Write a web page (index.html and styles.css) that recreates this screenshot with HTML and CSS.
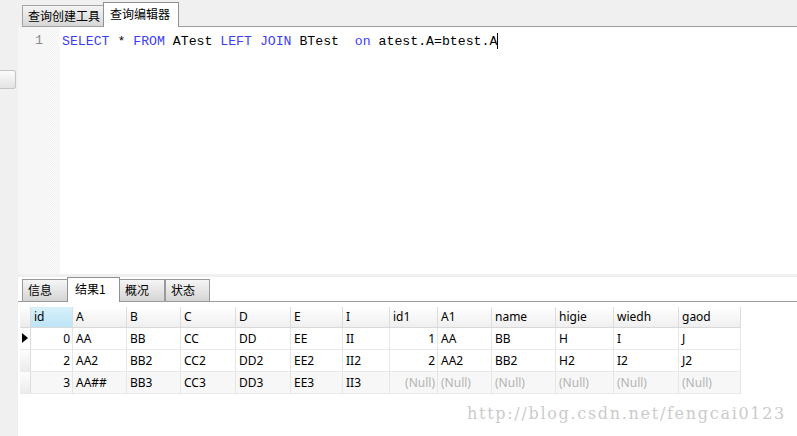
FILE: index.html
```html
<!DOCTYPE html>
<html>
<head>
<meta charset="utf-8">
<link rel="stylesheet" href="styles.css">
</head>
<body>
<div class="app">
  <div class="topbar">
    <div class="tb-pad"></div>
    <div class="tab">查询创建工具</div>
    <div class="tab active">查询编辑器</div>
    <div class="tb-fill"></div>
  </div>
  <div class="main">
    <div class="side"><div class="handle"></div></div>
    <div class="content">
      <div class="editor">
        <div class="gutter"><div class="ln">1</div></div>
        <div class="fold"></div>
        <div class="code"><span class="kw">SELECT</span> * <span class="kw">FROM</span> ATest <span class="kw">LEFT</span> <span class="kw">JOIN</span> BTest  <span class="kw">on</span> atest.A=btest.A<span class="caret"></span></div>
      </div>
      <div class="split"></div>
      <div class="results">
        <div class="rtabs">
          <div class="rt-pad"></div>
          <div class="rtab w46">信息</div>
          <div class="rtab active">结果1</div>
          <div class="rtab w46">概况</div>
          <div class="rtab w45">状态</div>
          <div class="rt-fill"></div>
        </div>
        <div class="grid">
          <div class="c hd rh"></div>
          <div class="c hd sel">id</div>
          <div class="c hd">A</div>
          <div class="c hd">B</div>
          <div class="c hd">C</div>
          <div class="c hd">D</div>
          <div class="c hd">E</div>
          <div class="c hd">I</div>
          <div class="c hd">id1</div>
          <div class="c hd">A1</div>
          <div class="c hd">name</div>
          <div class="c hd">higie</div>
          <div class="c hd">wiedh</div>
          <div class="c hd">gaod</div>

          <div class="c rh cur"><span class="tri"></span></div>
          <div class="c num">0</div>
          <div class="c">AA</div>
          <div class="c">BB</div>
          <div class="c">CC</div>
          <div class="c">DD</div>
          <div class="c">EE</div>
          <div class="c">II</div>
          <div class="c num">1</div>
          <div class="c">AA</div>
          <div class="c">BB</div>
          <div class="c">H</div>
          <div class="c">I</div>
          <div class="c">J</div>

          <div class="c rh"></div>
          <div class="c num">2</div>
          <div class="c">AA2</div>
          <div class="c">BB2</div>
          <div class="c">CC2</div>
          <div class="c">DD2</div>
          <div class="c">EE2</div>
          <div class="c">II2</div>
          <div class="c num">2</div>
          <div class="c">AA2</div>
          <div class="c">BB2</div>
          <div class="c">H2</div>
          <div class="c">I2</div>
          <div class="c">J2</div>

          <div class="c rh"></div>
          <div class="c num alt">3</div>
          <div class="c alt">AA##</div>
          <div class="c alt">BB3</div>
          <div class="c alt">CC3</div>
          <div class="c alt">DD3</div>
          <div class="c alt">EE3</div>
          <div class="c alt">II3</div>
          <div class="c num alt null">(Null)</div>
          <div class="c alt null">(Null)</div>
          <div class="c alt null">(Null)</div>
          <div class="c alt null">(Null)</div>
          <div class="c alt null">(Null)</div>
          <div class="c alt null">(Null)</div>
        </div>
      </div>
    </div>
  </div>
  <div class="watermark">http://blog.csdn.net/fengcai0123</div>
</div>
</body>
</html>
```
FILE: styles.css
```css
* { box-sizing: border-box; }
html, body { margin: 0; padding: 0; }
body {
  width: 797px;
  height: 436px;
  overflow: hidden;
  background: #f0f0f0;
  font-family: "Noto Sans", "Noto Sans CJK SC", sans-serif;
  font-size: 12px;
  color: #000;
}
.app {
  position: relative;
  width: 797px;
  height: 436px;
  display: flex;
  flex-direction: column;
}
.topbar {
  height: 27px;
  display: flex;
  align-items: flex-end;
  flex: none;
}
.tb-pad { width: 22px; height: 27px; }
.tab {
  height: 22px;
  width: 82px;
  border: 1px solid #a3a3a3;
  background: linear-gradient(#f4f4f4, #d6d6d6);
  padding-left: 5px;
  line-height: 19px;
  font-family: "Noto Sans CJK SC", sans-serif;
  font-size: 12px;
  white-space: nowrap;
}
.tab.active {
  height: 25px;
  width: 76px;
  margin-left: -1px;
  background: #fff;
  border-color: #8f9196;
  border-bottom: none;
  line-height: 21px;
  padding-left: 6px;
}
.tb-fill {
  flex: 1;
  height: 27px;
  border-bottom: 1px solid #9c9c9c;
}
.main {
  flex: 1;
  display: flex;
}
.side {
  width: 18px;
  flex: none;
  background: #f0f0f0;
}
.handle {
  margin-top: 43px;
  width: 16px;
  height: 19px;
  border: 1px solid #c4c4c4;
  border-left: none;
  border-radius: 0 3px 3px 0;
  background: linear-gradient(#fbfbfb, #e3e3e3);
}
.content {
  flex: 1;
  display: flex;
  flex-direction: column;
}
.editor {
  height: 247px;
  display: flex;
  background: #fff;
  flex: none;
}
.gutter {
  width: 30px;
  background: #f6f6f6;
  padding-top: 6px;
}
.ln {
  text-align: right;
  padding-right: 5px;
  font-family: "Liberation Mono", monospace;
  font-size: 13.33px;
  line-height: 15px;
  color: #8a8a8a;
}
.fold {
  width: 12px;
  background-color: #f8f8f8;
  background-image: repeating-conic-gradient(#f2f2f2 0 25%, #fbfbfb 0 50%);
  background-size: 2px 2px;
}
.code {
  flex: 1;
  padding-top: 6px;
  padding-left: 2px;
  font-family: "Liberation Mono", monospace;
  font-size: 13.2px;
  line-height: 15px;
  white-space: pre;
  color: #000;
}
.kw { color: #3d3df5; }
.caret {
  display: inline-block;
  width: 1px;
  height: 16px;
  background: #000;
  vertical-align: -4px;
}
.split {
  height: 3px;
  background: #f0f0f0;
  flex: none;
}
.results {
  flex: 1;
  background: #fff;
}
.rtabs {
  height: 25px;
  display: flex;
  align-items: flex-end;
}
.rt-pad { width: 4px; height: 25px; border-bottom: 1px solid #9c9c9c; }
.rtab {
  height: 23px;
  border: 1px solid #9a9a9a;
  background: linear-gradient(#f6f6f6, #d4d4d4);
  padding-left: 5px;
  line-height: 20px;
  font-family: "Noto Sans CJK SC", sans-serif;
  font-size: 12px;
  white-space: nowrap;
}
.w46 { width: 46px; }
.w45 { width: 45px; }
.rtab.active {
  width: 53px;
  height: 25px;
  margin-left: -1px;
  margin-right: -1px;
  background: #fff;
  border-color: #8f9196;
  border-bottom: none;
  line-height: 22px;
  padding-left: 7px;
  position: relative;
}
.rt-fill {
  flex: 1;
  height: 25px;
  border-bottom: 1px solid #9c9c9c;
}
.grid {
  margin-top: 5px;
  margin-left: 2px;
  display: grid;
  grid-template-columns: 11px 42px 54px 54px 55px 55px 52px 47px 48px 54px 64px 58px 65px 62px;
  grid-template-rows: 21px repeat(3, 22px);
  width: 721px;
}
.c {
  border-right: 1px solid #e6e6e6;
  border-bottom: 1px solid #e9e9e9;
  padding: 0 3px;
  line-height: 21px;
  white-space: nowrap;
  overflow: hidden;
  font-size: 12px;
}
.hd {
  background: linear-gradient(#ffffff, #efefef);
  border-right: 1px solid #dddddd;
  border-bottom: 1px solid #d9d9d9;
  line-height: 20px;
}
.hd.sel {
  background: linear-gradient(#d8f0fb, #bde4f6);
}
.rh {
  background: linear-gradient(#fdfdfd, #ececec);
  border-right: 1px solid #dcdcdc;
  padding: 0;
}
.rh.cur {
  background: #fff;
  position: relative;
}
.tri {
  position: absolute;
  left: 2px;
  top: 5px;
  width: 0;
  height: 0;
  border-top: 5px solid transparent;
  border-bottom: 5px solid transparent;
  border-left: 6px solid #000;
}
.num { text-align: right; padding-right: 2px; }
.alt { background: #f7f7f7; }
.null { color: #b3b3b3; }
.watermark {
  position: absolute;
  left: 467px;
  top: 404px;
  font-family: "DejaVu Serif", serif;
  font-size: 16px;
  letter-spacing: 1.7px;
  color: #cbcbcb;
  white-space: nowrap;
}
```
